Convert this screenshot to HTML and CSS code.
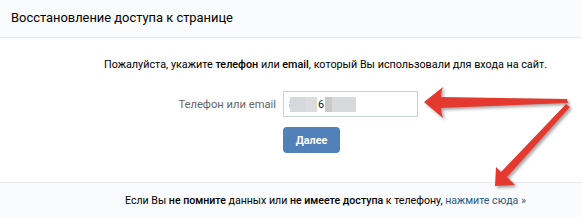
FILE: index.html
```html
<!DOCTYPE html>
<html lang="ru">
<head>
<meta charset="utf-8">
<title>Восстановление доступа к странице</title>
<link rel="stylesheet" href="styles.css">
</head>
<body>
<div class="page">
  <div class="header">Восстановление доступа к странице</div>
  <div class="content">
    <p class="intro">Пожалуйста, укажите <b>телефон</b> или <b>email</b>, который Вы использовали для входа на сайт.</p>
    <div class="form">
      <div class="row">
        <label class="label">Телефон или email</label>
        <div class="input">
          <span class="ch">8</span><span class="blur b1"></span><span class="blur b2"></span><span class="ch six">6</span><span class="blur b3"></span><span class="blur b4"></span>
        </div>
      </div>
      <div class="row">
        <span class="label"></span>
        <button class="btn">Далее</button>
      </div>
    </div>
  </div>
  <div class="footer">
    <p class="note">Если Вы <b>не помните</b> данных или <b>не имеете доступа</b> к телефону, <a class="link" href="#">нажмите сюда »</a></p>
  </div>
  <svg class="arrows" width="582" height="217" viewBox="0 0 582 217" xmlns="http://www.w3.org/2000/svg">
    <path d="M424 102 L443 87 Q441 93 441 97 L567 99 L568 103 L441 108 Q441 113 443 118 Z" fill="#e3392f"/>
    <path d="M495 186 L496 167 Q499 170 501 172 L566 104 L570 107 L507 177 Q511 181 515 185 Z" fill="#e3392f"/>
  </svg>
</div>
</body>
</html>
```

FILE: styles.css
```css
html, body {
  margin: 0;
  padding: 0;
  background: #fff;
}
body {
  font-family: Roboto, "Open Sans", "Liberation Sans", sans-serif;
  font-size: 10.8px;
  color: #000;
  overflow: hidden;
}
.page {
  position: relative;
  width: 582px;
  height: 217px;
  overflow: hidden;
}
.header {
  height: 37px;
  line-height: 36px;
  padding: 0 11px;
  font-size: 12.9px;
  color: #000;
  background: #fafbfc;
  border-bottom: 1px solid #e7e8ec;
}
.content {
  padding: 18px 0 29px 69px;
}
.intro {
  margin: 0;
  line-height: 18px;
  text-align: center;
  white-space: nowrap;
}
.intro b, .note b {
  font-weight: 500;
}
.form {
  display: flex;
  flex-direction: column;
  gap: 10px;
  margin-top: 17px;
}
.row {
  display: flex;
  align-items: center;
  gap: 7px;
}
.label {
  width: 207px;
  text-align: right;
  color: #656565;
  font-size: 11.2px;
  box-sizing: border-box;
}
.input {
  box-sizing: border-box;
  width: 135px;
  height: 26px;
  border: 1px solid #c9d0d7;
  display: flex;
  align-items: center;
  padding-left: 5px;
}
.ch {
  color: #222;
}
.ch.six {
  margin-left: 1px;
}
.blur {
  display: inline-block;
  height: 15px;
}
.b1 { width: 15px; background: #d6d8db; margin-left: -5px; }
.b2 { width: 12px; background: #dcdcdc; }
.b3 { width: 7px; background: #cacaca; margin-left: 1px; }
.b4 { width: 24px; background: #d8d9db; }
.btn {
  box-sizing: border-box;
  width: 57px;
  height: 26px;
  border: 0;
  border-radius: 4px;
  background: #5181b8;
  color: #fff;
  font-family: Roboto, "Open Sans", "Liberation Sans", sans-serif;
  font-size: 10.8px;
  font-weight: 700;
  padding: 0;
}
.footer {
  height: 35px;
  background: #fafbfc;
  border-top: 1px solid #e7e8ec;
  padding-left: 69px;
}
.note {
  margin: 0;
  line-height: 35px;
  text-align: center;
  white-space: nowrap;
  font-size: 10.6px;
}
.link {
  color: #2a5885;
  text-decoration: none;
}
.arrows {
  position: absolute;
  left: 0;
  top: 0;
  pointer-events: none;
  filter: drop-shadow(2px 2px 1.5px rgba(0,0,0,0.35));
}
```
